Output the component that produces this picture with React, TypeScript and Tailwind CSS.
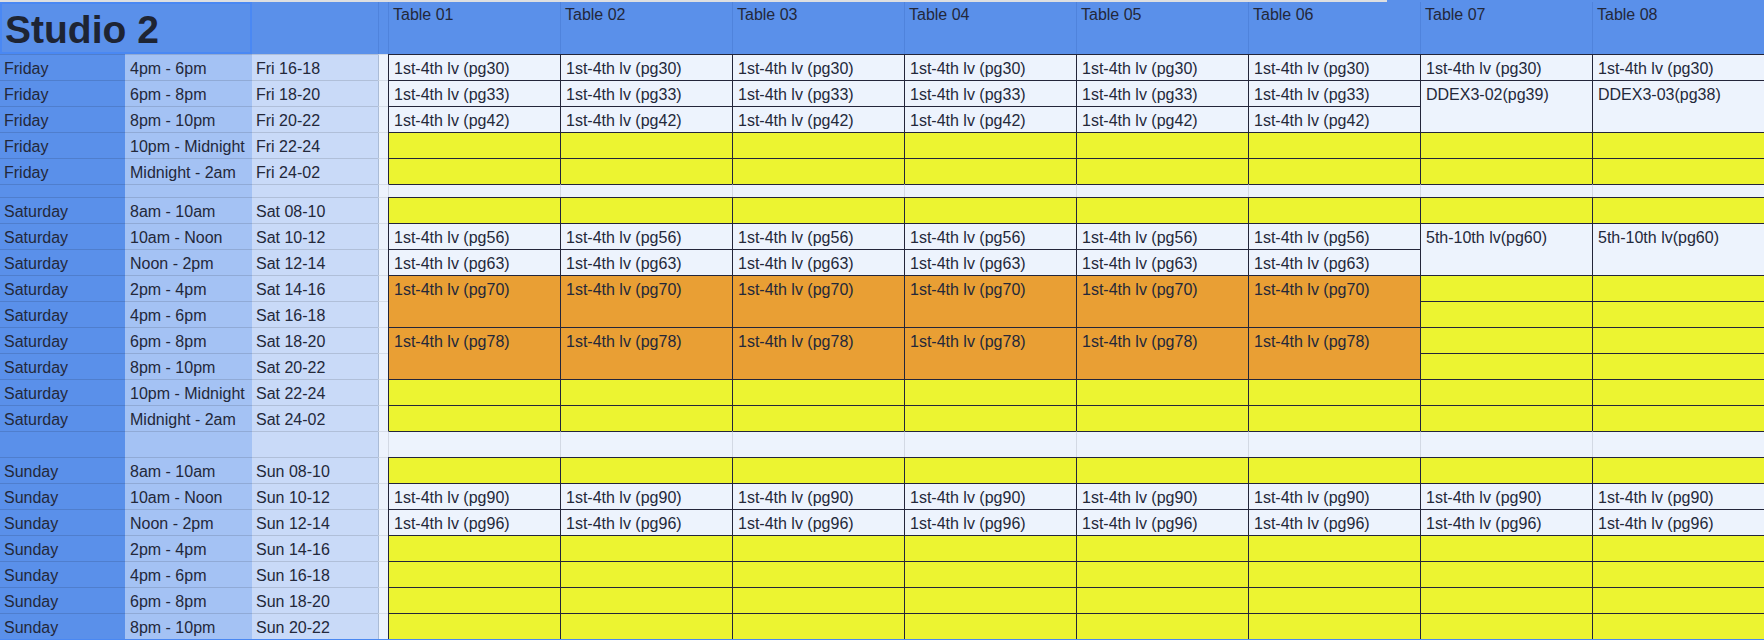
import { Fragment } from "react";

type Kind = "light" | "yellow" | "orange";
type Cell = { kind: Kind; text?: string; tall?: boolean };
type Slot = { day: string; time: string; code: string; cells: Cell[] };
type Row = Slot | { blank: true };

const lv = (pg: number): Cell => ({ kind: "light", text: `1st-4th lv (pg${pg})` });
const orange = (pg: number): Cell => ({ kind: "orange", text: `1st-4th lv (pg${pg})`, tall: true });
const merged = (text: string): Cell => ({ kind: "light", text, tall: true });
const Y: Cell = { kind: "yellow" };
const times = (n: number, c: Cell) => Array.from({ length: n }, () => c);

const tables = ["Table 01", "Table 02", "Table 03", "Table 04", "Table 05", "Table 06", "Table 07", "Table 08"];

const rows: Row[] = [
  { day: "Friday", time: "4pm - 6pm", code: "Fri 16-18", cells: times(8, lv(30)) },
  {
    day: "Friday",
    time: "6pm - 8pm",
    code: "Fri 18-20",
    cells: [...times(6, lv(33)), merged("DDEX3-02(pg39)"), merged("DDEX3-03(pg38)")],
  },
  { day: "Friday", time: "8pm - 10pm", code: "Fri 20-22", cells: times(6, lv(42)) },
  { day: "Friday", time: "10pm - Midnight", code: "Fri 22-24", cells: times(8, Y) },
  { day: "Friday", time: "Midnight - 2am", code: "Fri 24-02", cells: times(8, Y) },
  { blank: true },
  { day: "Saturday", time: "8am - 10am", code: "Sat 08-10", cells: times(8, Y) },
  {
    day: "Saturday",
    time: "10am - Noon",
    code: "Sat 10-12",
    cells: [...times(6, lv(56)), merged("5th-10th lv(pg60)"), merged("5th-10th lv(pg60)")],
  },
  { day: "Saturday", time: "Noon - 2pm", code: "Sat 12-14", cells: times(6, lv(63)) },
  { day: "Saturday", time: "2pm - 4pm", code: "Sat 14-16", cells: [...times(6, orange(70)), Y, Y] },
  { day: "Saturday", time: "4pm - 6pm", code: "Sat 16-18", cells: [Y, Y] },
  { day: "Saturday", time: "6pm - 8pm", code: "Sat 18-20", cells: [...times(6, orange(78)), Y, Y] },
  { day: "Saturday", time: "8pm - 10pm", code: "Sat 20-22", cells: [Y, Y] },
  { day: "Saturday", time: "10pm - Midnight", code: "Sat 22-24", cells: times(8, Y) },
  { day: "Saturday", time: "Midnight - 2am", code: "Sat 24-02", cells: times(8, Y) },
  { blank: true },
  { day: "Sunday", time: "8am - 10am", code: "Sun 08-10", cells: times(8, Y) },
  { day: "Sunday", time: "10am - Noon", code: "Sun 10-12", cells: times(8, lv(90)) },
  { day: "Sunday", time: "Noon - 2pm", code: "Sun 12-14", cells: times(8, lv(96)) },
  { day: "Sunday", time: "2pm - 4pm", code: "Sun 14-16", cells: times(8, Y) },
  { day: "Sunday", time: "4pm - 6pm", code: "Sun 16-18", cells: times(8, Y) },
  { day: "Sunday", time: "6pm - 8pm", code: "Sun 18-20", cells: times(8, Y) },
  { day: "Sunday", time: "8pm - 10pm", code: "Sun 20-22", cells: times(8, Y) },
];

const leftCell = "overflow-hidden whitespace-nowrap border-t border-[rgba(0,0,0,0.12)] pt-[5px] leading-[18px]";
const gapCell = "border-l border-t border-l-[#aabbd6] border-t-[#d6dde8] bg-[#edf3fd]";

function cellClass(c: Cell) {
  const bg = c.kind === "yellow" ? "bg-[#ecf431]" : c.kind === "orange" ? "bg-[#e99f34]" : "bg-[#edf3fd]";
  return [
    "overflow-hidden whitespace-nowrap border-l border-t border-[#23253a] pl-[5px] pt-[5px] leading-[18px]",
    bg,
    c.tall ? "row-span-2" : "",
  ].join(" ");
}

export default function App() {
  return (
    <div className="h-[640px] w-[1764px] overflow-hidden bg-white font-['Liberation_Sans',Arial,sans-serif] text-[16px] text-[#23283a]">
      <div className="flex h-[2px]">
        <div className="w-[1387px] bg-[#dedfe1]" />
        <div className="flex-1 bg-[#5a90ea]" />
      </div>

      <div className="grid grid-cols-[125px_127px_126px_10px_repeat(8,172px)] grid-rows-[52px_repeat(5,26px)_13px_repeat(9,26px)_26px_repeat(7,26px)] border-b-2 border-[#4a88f2]">
        {/* header row */}
        <div className="col-span-2 border-2 border-[#4a88f3] bg-[#5a90ea] pl-[3px] pt-[6px] text-[39px] font-bold leading-none text-[#1e2433]">
          Studio 2
        </div>
        <div className="bg-[#5a90ea]" />
        <div className="border-l border-[#4f83dc] bg-[#5a90ea]" />
        {tables.map((t) => (
          <div key={t} className="border-l border-[#4f83dc] bg-[#5a90ea] pl-[4px] pt-[4px] leading-[18px]">
            {t}
          </div>
        ))}

        {rows.map((r, i) =>
          "blank" in r ? (
            <Fragment key={i}>
              <div className={`${leftCell} bg-[#5a90ea]`} />
              <div className={`${leftCell} bg-[#a4c2f4]`} />
              <div className={`${leftCell} bg-[#c9daf8]`} />
              <div className={gapCell} />
              {tables.map((t) => (
                <div key={t} className="border-l border-t border-l-[#d3d9e4] border-t-[#23253a] bg-[#edf3fd]" />
              ))}
            </Fragment>
          ) : (
            <Fragment key={i}>
              <div className={`${leftCell} bg-[#5a90ea] pl-[4px]`}>{r.day}</div>
              <div className={`${leftCell} bg-[#a4c2f4] pl-[5px]`}>{r.time}</div>
              <div className={`${leftCell} bg-[#c9daf8] pl-[4px]`}>{r.code}</div>
              <div className={gapCell} />
              {r.cells.map((c, j) => (
                <div key={j} className={cellClass(c)}>
                  {c.text}
                </div>
              ))}
            </Fragment>
          )
        )}
      </div>
    </div>
  );
}
